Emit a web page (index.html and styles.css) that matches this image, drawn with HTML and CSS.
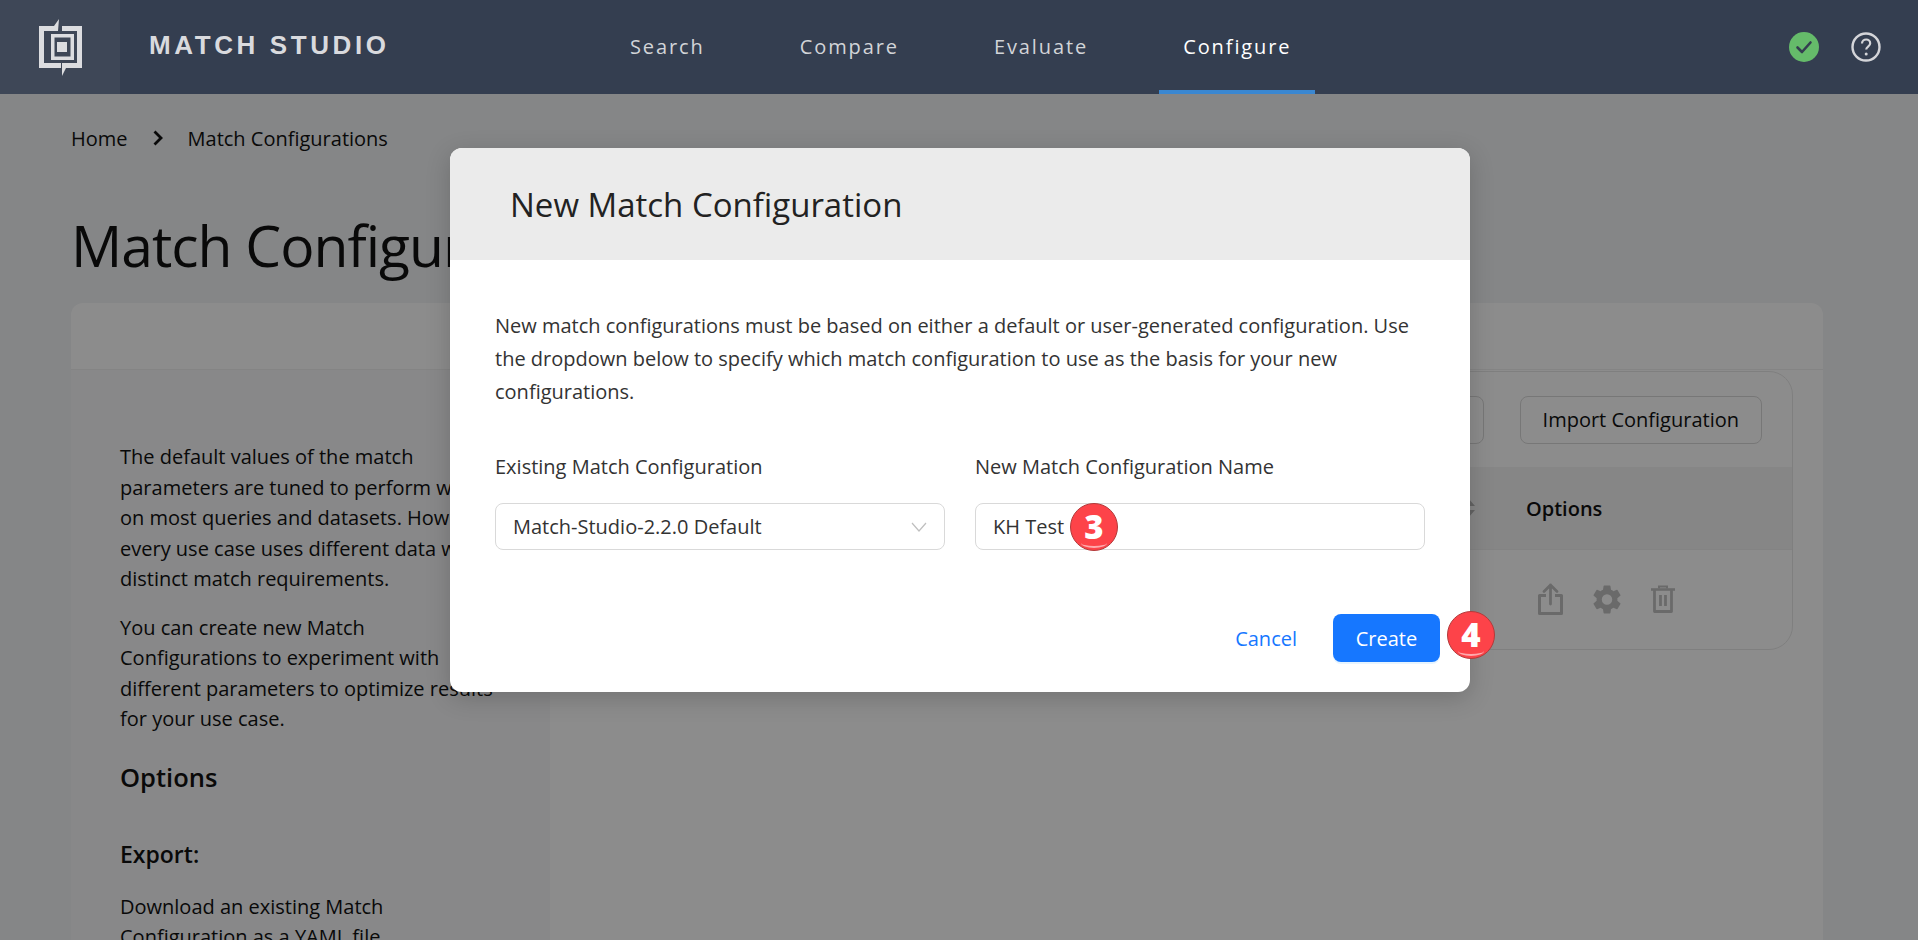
FILE: index.html
```html
<!DOCTYPE html>
<html lang="en">
<head>
  <meta charset="UTF-8" />
  <title>Match Studio - Match Configurations</title>
  <link rel="stylesheet" href="styles.css">
</head>
<body>

  <header class="topbar">
    <div class="logo-box">
      <svg class="logo" viewBox="0 0 43 57" width="43" height="57">
        <path fill="#dcdde0" d="M0 7H15L20 0 19 12H5V44H22V49H0Z"/>
        <path fill="#dcdde0" d="M23 7H43V49H27L23 57 23 44H38V12H23Z"/>
        <path fill="#dcdde0" fill-rule="evenodd" d="M12 15H35V41H12ZM15.500 18.500V37.500H31.500V18.500Z"/>
        <rect fill="#dcdde0" x="18" y="23" width="10" height="10"/>
      </svg>
    </div>
    <div class="brand">MATCH STUDIO</div>
    <nav class="nav">
      <a class="nav-item">Search</a>
      <a class="nav-item">Compare</a>
      <a class="nav-item">Evaluate</a>
      <a class="nav-item active">Configure</a>
    </nav>
    <div class="status-icons">
      <svg viewBox="0 0 30 30" width="30" height="30">
        <circle cx="15" cy="15" r="15" fill="#65bb6a"/>
        <path d="M8.500 15.500l4.500 4.500 8.500-9.500" fill="none" stroke="#343e50" stroke-width="2.600" stroke-linecap="round" stroke-linejoin="round"/>
      </svg>
      <svg viewBox="0 0 30 30" width="30" height="30">
        <circle cx="15" cy="15" r="13.500" fill="none" stroke="#d4d5d9" stroke-width="2.400"/>
        <path d="M11 11.500c0-2.500 2-4 4.200-4s4 1.500 4 3.700c0 3.300-4 3.300-4 6.300" fill="none" stroke="#d4d5d9" stroke-width="2.200"/>
        <circle cx="15.200" cy="22" r="1.500" fill="#d4d5d9"/>
      </svg>
    </div>
  </header>

  <main class="page">
    <div class="crumbs">
      <span>Home</span>
      <svg viewBox="0 0 12 16" width="12" height="16"><path d="M2.500 1.500l6.500 6.500-6.500 6.500" fill="none" stroke="#111" stroke-width="2.800"/></svg>
      <span>Match Configurations</span>
    </div>
    <h1>Match Configurations</h1>

    <section class="card">
      <div class="card-top"></div>
      <div class="card-body">
        <aside class="help">
          <p>The default values of the match<br>parameters are tuned to perform well<br>on most queries and datasets. However,<br>every use case uses different data with<br>distinct match requirements.</p>
          <p>You can create new Match<br>Configurations to experiment with<br>different parameters to optimize results<br>for your use case.</p>
          <h2>Options</h2>
          <h3>Export:</h3>
          <p>Download an existing Match<br>Configuration as a YAML file.</p>
        </aside>
        <div class="content">
          <div class="table-panel">
            <div class="table-actions">
              <button class="btn">New Configuration</button>
              <button class="btn">Import Configuration</button>
            </div>
            <div class="table-head">
              <svg class="sort" viewBox="0 0 12 18" width="12" height="18">
                <path d="M6 0l6 7H0zM6 18l6-7H0z" fill="#b5b5b5"/>
              </svg>
              <span class="options-col">Options</span>
            </div>
            <div class="table-row">
              <div class="row-icons">
                <svg viewBox="0 0 25 32" width="25" height="32">
                  <path d="M8 12.500H1.500V30.500H23.500V12.500H17" fill="none" stroke="#c2c2c2" stroke-width="3" stroke-linejoin="round"/>
                  <path d="M12.500 21V2M6 8.500L12.500 2 19 8.500" fill="none" stroke="#c2c2c2" stroke-width="2.800" stroke-linecap="round" stroke-linejoin="round"/>
                </svg>
                <svg viewBox="2.500 2 19 20" width="28" height="29">
                  <path fill="#c2c2c2" d="M19.140 12.940c.04-.3.060-.61.060-.94s-.02-.64-.07-.94l2.030-1.580a.49.490 0 0 0 .12-.61l-1.920-3.320a.49.490 0 0 0-.59-.22l-2.390.96a7 7 0 0 0-1.620-.94l-.36-2.540a.48.480 0 0 0-.48-.41h-3.840a.48.480 0 0 0-.47.410l-.36 2.540a7.200 7.200 0 0 0-1.620.94l-2.390-.96a.48.480 0 0 0-.59.22L2.740 8.870a.48.480 0 0 0 .12.61l2.030 1.580c-.05.3-.09.63-.09.940s.02.640.07.940l-2.030 1.580a.49.490 0 0 0-.12.610l1.920 3.320c.12.220.37.290.59.220l2.390-.96c.5.380 1.030.700 1.620.940l.36 2.540c.05.240.24.410.48.410h3.840c.24 0 .44-.17.470-.41l.36-2.540a7 7 0 0 0 1.620-.94l2.390.96c.22.080.47 0 .59-.22l1.920-3.320a.48.480 0 0 0-.12-.61zM12 15.600a3.600 3.600 0 1 1 0-7.200 3.600 3.600 0 0 1 0 7.200z"/>
                </svg>
                <svg viewBox="0 0 24 28" width="24" height="28">
                  <path d="M0 4.500H24" stroke="#c2c2c2" stroke-width="2.600"/>
                  <path d="M8 3.500V1.500H16V3.500" fill="none" stroke="#c2c2c2" stroke-width="2"/>
                  <path d="M3.500 5V26.500H20.500V5M9.500 10V21M14.500 10V21" fill="none" stroke="#c2c2c2" stroke-width="2.800" stroke-linejoin="round"/>
                </svg>
              </div>
            </div>
          </div>
        </div>
      </div>
    </section>
  </main>

  <div class="overlay">
    <div class="modal">
      <div class="modal-title">New Match Configuration</div>
      <div class="modal-body">
        <p>New match configurations must be based on either a default or user-generated configuration. Use the dropdown below to specify which match configuration to use as the basis for your new configurations.</p>
        <div class="fields">
          <div class="field">
            <label>Existing Match Configuration</label>
            <div class="select">
              <span>Match-Studio-2.2.0 Default</span>
              <svg viewBox="0 0 16 10" width="16" height="10"><path d="M1 1l7 8 7-8" fill="none" stroke="#bfbfbf" stroke-width="1.200"/></svg>
            </div>
          </div>
          <div class="field">
            <label>New Match Configuration Name</label>
            <div class="select input-box">
              <span>KH Test</span>
              <span class="step step-3">3</span>
            </div>
          </div>
        </div>
      </div>
      <div class="modal-footer">
        <button class="btn-link">Cancel</button>
        <button class="btn-primary">Create</button>
        <span class="step step-4">4</span>
      </div>
    </div>
  </div>

</body>
</html>
```

FILE: styles.css
```css
* { box-sizing: border-box; }

html, body {
  height: 940px;
  overflow: hidden;
}

body {
  margin: 0;
  position: relative;
  font-family: 'Open Sans', 'Noto Sans', sans-serif;
  font-size: 20px;
  color: #111;
  background: #f2f4f6;
}

.topbar {
  display: flex;
  align-items: stretch;
  height: 94px;
  background: #343e50;
  position: relative;
  z-index: 2;
}

.logo-box {
  width: 120px;
  display: flex;
  align-items: center;
  justify-content: center;
  background: #3e4757;
}

.brand {
  width: 486px;
  padding-left: 29px;
  line-height: 90px;
  font-family: 'Liberation Sans', sans-serif;
  font-weight: 700;
  font-size: 26px;
  letter-spacing: 3.600px;
  color: #d9dade;
}

.nav {
  display: flex;
}

.nav-item {
  display: block;
  height: 94px;
  padding: 0 24px;
  margin-right: 47px;
  line-height: 94px;
  font-size: 20px;
  letter-spacing: 1.900px;
  color: #d2d4d8;
}

.nav-item.active {
  color: #fff;
  box-shadow: inset 0 -4px 0 #3a87d1;
}

.status-icons {
  margin-left: auto;
  padding-right: 37px;
  display: flex;
  align-items: center;
  gap: 32px;
}

.page {
  padding: 0 95px 0 71px;
}

.crumbs {
  height: 88px;
  display: flex;
  align-items: center;
  gap: 24px;
}

h1 {
  margin: 0;
  padding-top: 25px;
  height: 121px;
  font-size: 57px;
  font-weight: 400;
  line-height: 76px;
  letter-spacing: -1px;
}

.card {
  width: 1752px;
  height: 800px;
  background: #fff;
  border-radius: 12px 12px 0 0;
}

.card-top {
  height: 67px;
  border-bottom: 1px solid #f0f0f0;
}

.card-body {
  display: flex;
}

.help {
  width: 479px;
  height: 740px;
  padding: 72px 20px 0 49px;
  background: #f7f8f9;
  line-height: 30.500px;
}

.help p {
  margin: 0 0 18px;
}

.help h2 {
  margin: 0 0 44px;
  padding-top: 6px;
  font-size: 25.500px;
  font-weight: 600;
  line-height: 36px;
}

.help h3 {
  margin: 0 0 23px;
  font-size: 23px;
  font-weight: 600;
  line-height: 30px;
}

.content {
  flex: 1;
  padding: 1px 30px 0 50px;
}

.table-panel {
  width: 1193px;
  height: 279px;
  border: 1px solid #e8e8e8;
  border-radius: 24px;
}

.table-actions {
  height: 95px;
  display: flex;
  justify-content: flex-end;
  align-items: center;
  gap: 36px;
  padding-right: 30px;
}

.btn {
  height: 48px;
  padding: 0 22px;
  background: #fff;
  border: 1px solid #d9d9d9;
  border-radius: 8px;
  font: inherit;
  color: #111;
}

.table-head {
  height: 83px;
  display: flex;
  justify-content: flex-end;
  align-items: center;
  background: #f5f5f5;
  border-bottom: 1px solid #efefef;
}

.sort {
  margin-right: 51px;
}

.options-col {
  width: 266px;
  font-weight: 600;
}

.row-icons {
  display: flex;
  align-items: center;
  gap: 30px;
  padding: 33px 0 0 937px;
}

.overlay {
  position: absolute;
  left: 0;
  top: 0;
  width: 100%;
  height: 100%;
  z-index: 1;
  background: rgba(0, 0, 0, 0.45);
}

.modal {
  position: absolute;
  left: 450px;
  top: 148px;
  width: 1020px;
  height: 544px;
  background: #fff;
  border-radius: 12px;
  box-shadow: 0 6px 24px rgba(0, 0, 0, 0.18);
  display: flex;
  flex-direction: column;
}

.modal-title {
  height: 112px;
  padding-left: 60px;
  line-height: 113px;
  background: #ebebeb;
  border-radius: 12px 12px 0 0;
  font-size: 33px;
  color: #222;
}

.modal-body {
  padding: 49px 45px 0;
  color: #333;
}

.modal-body p {
  margin: 0;
  line-height: 33px;
}

.fields {
  display: flex;
  gap: 30px;
  margin-top: 44px;
}

.field {
  flex: 1;
}

.field label {
  display: block;
  line-height: 30px;
  margin-bottom: 21px;
}

.select {
  height: 47px;
  padding: 0 17px;
  display: flex;
  align-items: center;
  justify-content: space-between;
  border: 1px solid #d9d9d9;
  border-radius: 8px;
}

.input-box {
  justify-content: flex-start;
  position: relative;
}

.step {
  position: absolute;
  width: 48px;
  height: 48px;
  border-radius: 50%;
  background: #fd4349;
  border: 1px solid #b33a3a;
  color: #fff;
  font-family: 'Open Sans', sans-serif;
  font-weight: 800;
  font-size: 33px;
  line-height: 45px;
  text-align: center;
}

.step::after {
  content: "";
  position: absolute;
  left: 10px;
  right: 10px;
  bottom: 2px;
  height: 8px;
  border-bottom: 2px solid rgba(255, 255, 255, 0.55);
  border-radius: 50%;
}

.step-3 {
  left: 94px;
  top: -1px;
}

.modal-footer {
  position: relative;
  margin-top: auto;
  padding: 0 30px 30px 0;
  display: flex;
  justify-content: flex-end;
  align-items: center;
  gap: 36px;
}

.step-4 {
  right: -25px;
  bottom: 33px;
}

.btn-link {
  padding: 0;
  background: none;
  border: 0;
  font: inherit;
  color: #1677ff;
}

.btn-primary {
  width: 107px;
  height: 48px;
  background: #1677ff;
  border: 0;
  border-radius: 8px;
  font: inherit;
  color: #fff;
  box-shadow: 0 2px 0 rgba(5, 145, 255, 0.1);
}
```
